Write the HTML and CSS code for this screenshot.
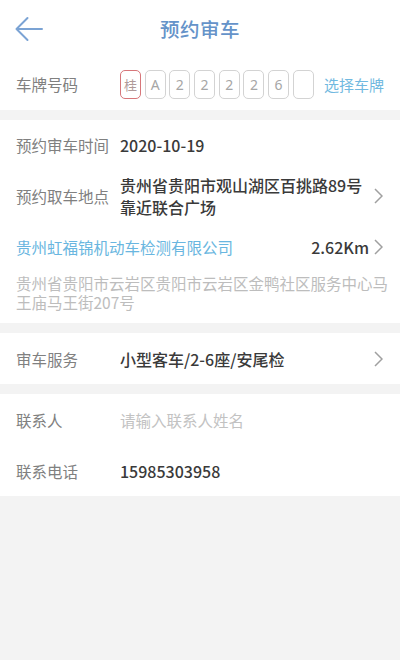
FILE: index.html
```html
<!DOCTYPE html>
<html lang="zh-CN">
<head>
<meta charset="utf-8">
<title>预约审车</title>
<link rel="stylesheet" href="styles.css">
</head>
<body>
<div class="page">
  <header class="topbar">
    <div class="back">
      <svg width="28" height="26" viewBox="0 0 28 26"><path d="M1.5 13 H27 M12.5 2 L1.5 13 L12.5 24" fill="none" stroke="#7ba3d4" stroke-width="2" stroke-linecap="round" stroke-linejoin="round"/></svg>
    </div>
    <h1 class="title">预约审车</h1>
    <div></div>
  </header>

  <section class="card plate-row">
    <span class="label">车牌号码</span>
    <div class="plates">
      <span class="plate active">桂</span>
      <span class="plate">A</span>
      <span class="plate">2</span>
      <span class="plate">2</span>
      <span class="plate">2</span>
      <span class="plate">2</span>
      <span class="plate">6</span>
      <span class="plate"></span>
    </div>
    <span class="pick">选择车牌</span>
  </section>

  <section class="card">
    <div class="row r-time">
      <span class="label">预约审车时间</span>
      <span class="value">2020-10-19</span>
    </div>
    <div class="row r-loc">
      <span class="label">预约取车地点</span>
      <span class="value multi"><span class="line">贵州省贵阳市观山湖区百挑路89号</span><span class="line">靠近联合广场</span></span>
      <span class="chev"><svg width="9" height="16" viewBox="0 0 9 16"><path d="M1 1 L8 8 L1 15" fill="none" stroke="#a0a0a0" stroke-width="1.5"/></svg></span>
    </div>
    <div class="row r-company">
      <span class="company">贵州虹福锦机动车检测有限公司</span>
      <span class="dist">2.62Km</span>
      <span class="chev"><svg width="9" height="16" viewBox="0 0 9 16"><path d="M1 1 L8 8 L1 15" fill="none" stroke="#a0a0a0" stroke-width="1.5"/></svg></span>
    </div>
    <p class="address">贵州省贵阳市云岩区贵阳市云岩区金鸭社区服务中心马王庙马王街207号</p>
  </section>

  <section class="card">
    <div class="row r-std">
      <span class="label">审车服务</span>
      <span class="value">小型客车/2-6座/安尾检</span>
      <span class="chev"><svg width="9" height="16" viewBox="0 0 9 16"><path d="M1 1 L8 8 L1 15" fill="none" stroke="#a0a0a0" stroke-width="1.5"/></svg></span>
    </div>
  </section>

  <section class="card">
    <div class="row r-std">
      <span class="label">联系人</span>
      <span class="placeholder">请输入联系人姓名</span>
    </div>
    <div class="row r-std">
      <span class="label">联系电话</span>
      <span class="value">15985303958</span>
    </div>
  </section>
</div>
</body>
</html>
```

FILE: styles.css
```css
* { box-sizing: border-box; }
html, body {
  margin: 0;
  padding: 0;
  background: #f3f3f3;
}
body {
  font-family: "Noto Sans CJK SC", "Noto Sans", sans-serif;
  width: 400px;
  height: 660px;
  overflow: hidden;
}
.page {
  display: flex;
  flex-direction: column;
  gap: 10px;
}
.topbar {
  height: 60px;
  background: #fff;
  display: grid;
  grid-template-columns: 80px 1fr 80px;
  align-items: center;
  margin-bottom: -10px;
}
.back {
  padding-left: 15px;
  display: flex;
  align-items: center;
  padding-bottom: 2px;
}
.back svg { display: block; }
.title {
  margin: 0;
  text-align: center;
  font-size: 19.5px;
  font-weight: 500;
  color: #6593c9;
  letter-spacing: 0.5px;
  padding-bottom: 3px;
}
.card {
  background: #fff;
}
.label {
  width: 104px;
  flex: none;
  font-size: 15.5px;
  color: #808080;
}
.plate-row {
  height: 50px;
  display: flex;
  align-items: center;
  padding: 0 16px 2px 16px;
}
.plates {
  display: flex;
  gap: 3.7px;
}
.plate {
  width: 21px;
  height: 29px;
  border: 1.5px solid #d3d3d3;
  border-radius: 5px;
  display: flex;
  align-items: center;
  justify-content: center;
  font-size: 14px;
  color: #a6a6a6;
  font-family: "Noto Sans", "Noto Sans CJK SC", sans-serif;
}
.plate.active {
  border-color: #d7767a;
  font-family: "Noto Sans CJK SC", sans-serif;
  font-size: 13px;
  color: #b09a9a;
}
.pick {
  margin-left: auto;
  font-size: 15px;
  color: #71b9e0;
}
.row {
  display: flex;
  align-items: center;
  padding: 0 16px;
}
.value {
  flex: 1;
  font-size: 16px;
  font-weight: 500;
  color: #3a3a3a;
  white-space: nowrap;
}
.value.multi {
  display: flex;
  flex-direction: column;
  line-height: 22px;
}
.chev {
  flex: none;
  display: flex;
  align-items: center;
  margin-left: 5px;
  margin-right: 1px;
}
.chev svg { display: block; }
.r-time { height: 50px; }
.r-loc { height: 52px; }
.r-company { height: 50px; }
.r-std { height: 51px; }
.company {
  flex: 1;
  font-size: 15.5px;
  color: #69b6e0;
}
.dist {
  font-size: 16px;
  font-weight: 500;
  color: #3a3a3a;
}
.address {
  margin: 0;
  padding: 2px 10px 11px 16px;
  font-size: 15.5px;
  line-height: 19px;
  color: #bdbdbd;
}
.placeholder {
  font-size: 15.5px;
  color: #c2c2c2;
}
```
